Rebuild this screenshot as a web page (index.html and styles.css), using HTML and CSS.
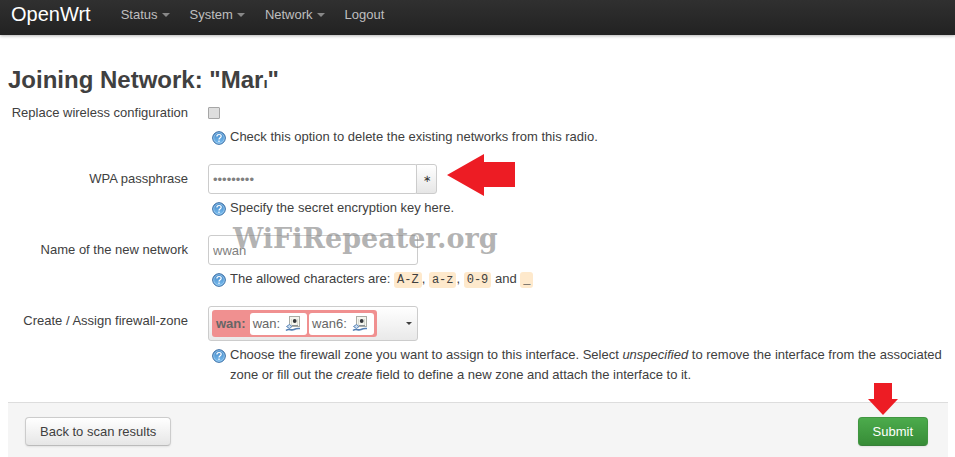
FILE: index.html
```html
<!DOCTYPE html>
<html lang="en">
<head>
<meta charset="utf-8">
<meta name="viewport" content="width=device-width, initial-scale=1">
<title>OpenWrt</title>
<link rel="stylesheet" href="styles.css">
</head>
<body>
<svg class="sprites" aria-hidden="true">
  <defs>
    <linearGradient id="ball" x1="0" y1="0" x2="0" y2="1">
      <stop offset="0" stop-color="#3f83c4"/>
      <stop offset="1" stop-color="#7cc0f2"/>
    </linearGradient>
    <symbol id="help" viewBox="0 0 14 14">
      <circle cx="7" cy="7" r="6.3" fill="url(#ball)" stroke="#2c629c" stroke-width="1"/>
      <circle cx="7" cy="7" r="5.3" fill="none" stroke="#a9d2f2" stroke-width=".7"/>
      <path d="M4.900 5.600C4.900 4.200 5.800 3.500 7 3.500C8.300 3.500 9.200 4.200 9.200 5.300C9.200 6.800 7 6.700 7 8.500M7 9.600V11" fill="none" stroke="#fff" stroke-width="1.200"/>
    </symbol>
    <symbol id="wifi" viewBox="0 0 16 16">
      <rect x="4.500" y=".5" width="10" height="10" fill="#f4f5ee" stroke="#a9aca5"/>
      <path d="M6.500 9V3M12.500 9V3" stroke="#d9dcd2" fill="none"/>
      <circle cx="9.700" cy="5" r="1.900" fill="#34383b"/>
      <path d="M7 9.500h6" stroke="#8b9297"/>
      <path d="M1.500 10.500L4.500 8.500L7 10.500L4.500 12.500Z" fill="#c8dcf0" stroke="#5c86b8"/>
      <path d="M1 14.500C4 12 6 15 9 13.500S13 12.500 15 12.500" fill="none" stroke="#5580b4" stroke-width="1.600"/>
    </symbol>
  </defs>
</svg>

<header class="topbar">
  <a class="brand" href="#">OpenWrt</a>
  <nav class="menu">
    <a class="has-menu" href="#">Status</a>
    <a class="has-menu" href="#">System</a>
    <a class="has-menu" href="#">Network</a>
    <a href="#">Logout</a>
  </nav>
</header>

<main class="page">
  <h1>Joining Network: "Mar<span class="cut">ı</span>"</h1>
  <form>
    <div class="row">
      <label class="name" for="replace">Replace wireless configuration</label>
      <div class="field">
        <div class="check"><input type="checkbox" id="replace"></div>
        <p class="hint"><svg class="help"><use href="#help"/></svg>Check this option to delete the existing networks from this radio.</p>
      </div>
    </div>

    <div class="row">
      <label class="name tall" for="key">WPA passphrase</label>
      <div class="field">
        <div class="group">
          <input class="text" type="password" id="key" value="password1">
          <button class="reveal" type="button" aria-label="Reveal password">∗</button>
          <svg class="arrow-left" viewBox="0 0 68 42" aria-hidden="true"><path d="M0 21L37 0V8H68V33H37V42Z"/></svg>
        </div>
        <p class="hint"><svg class="help"><use href="#help"/></svg>Specify the secret encryption key here.</p>
      </div>
    </div>

    <div class="row">
      <label class="name tall" for="netname">Name of the new network</label>
      <div class="field">
        <div class="group">
          <input class="text" type="text" id="netname" value="wwan">
          <span class="watermark">WiFiRepeater.org</span>
        </div>
        <p class="hint"><svg class="help"><use href="#help"/></svg>The allowed characters are: <code>A-Z</code>, <code>a-z</code>, <code>0-9</code> and <code>_</code></p>
      </div>
    </div>

    <div class="row">
      <label class="name tall" for="zone">Create / Assign firewall-zone</label>
      <div class="field">
        <button class="zone-select" type="button" id="zone" aria-haspopup="listbox">
          <span class="zone"><strong>wan:</strong>
            <span class="iface">wan: <svg class="wifi"><use href="#wifi"/></svg></span>
            <span class="iface">wan6: <svg class="wifi"><use href="#wifi"/></svg></span>
          </span>
        </button>
        <p class="hint"><svg class="help"><use href="#help"/></svg>Choose the firewall zone you want to assign to this interface. Select <em>unspecified</em> to remove the interface from the associated zone or fill out the <em>create</em> field to define a new zone and attach the interface to it.</p>
      </div>
    </div>

    <div class="actions">
      <button class="btn" type="button">Back to scan results</button>
      <button class="btn submit" type="submit">Submit</button>
      <svg class="arrow-down" viewBox="0 0 30 32" aria-hidden="true"><path d="M6 0H24V16H30L15 32L0 16H6Z"/></svg>
    </div>
  </form>
</main>
</body>
</html>
```
FILE: styles.css
```css
* {
  box-sizing: border-box;
}

body {
  margin: 0;
  background: #fff;
  color: #404040;
  font: 13px/20px "Liberation Sans", Arial, sans-serif;
}

.sprites {
  position: absolute;
  width: 0;
  height: 0;
}

.topbar {
  display: flex;
  gap: 20px;
  height: 35px;
  padding: 0 11px;
  line-height: 28px;
  background: linear-gradient(#303030, #222);
  box-shadow: 0 1px 3px rgba(0, 0, 0, .3);
}

.topbar a {
  color: #bfbfbf;
  text-decoration: none;
}

.topbar .brand {
  color: #fff;
  font-size: 20px;
}

.menu {
  display: flex;
  gap: 20px;
  padding: 1px 0 0 10px;
}

.has-menu::after {
  content: "";
  display: inline-block;
  margin-left: 4px;
  vertical-align: 2px;
  border: 4px solid transparent;
  border-top-color: #888;
  border-bottom: 0;
}

.page {
  max-width: 940px;
  margin: 0 7px 0 8px;
}

h1 {
  margin: 27px 0 2px;
  font-size: 24px;
  line-height: 36px;
}

.cut {
  font-size: 15px;
}

.row {
  display: grid;
  grid-template-columns: 180px 1fr;
  gap: 20px;
  margin-bottom: 17px;
}

.name {
  text-align: right;
}

.tall {
  line-height: 30px;
}

.check {
  display: flex;
  align-items: center;
  height: 20px;
}

.check input {
  appearance: none;
  width: 12px;
  height: 12px;
  margin: 0;
  border: 1px solid #a6a6a6;
  border-radius: 1px;
  background: #dedede;
}

.hint {
  position: relative;
  margin: 4px 0 0;
  padding-left: 22px;
}

.help {
  position: absolute;
  top: 4px;
  left: 4px;
  width: 14px;
  height: 14px;
}

.group {
  position: relative;
  display: flex;
}

.text {
  width: 210px;
  height: 30px;
  padding: 4px;
  border: 1px solid #ccc;
  border-radius: 3px;
  background: #fff;
  color: #808080;
  font: inherit;
}

.reveal {
  width: 21px;
  height: 30px;
  margin-left: -2px;
  padding: 0;
  border: 1px solid #ccc;
  border-radius: 0 3px 3px 0;
  background: linear-gradient(#fff, #e6e6e6);
  color: #333;
  font: inherit;
  font-size: 10px;
}

.arrow-left {
  position: absolute;
  top: -10px;
  left: 239px;
  width: 68px;
  height: 42px;
}

.arrow-left path,
.arrow-down path {
  fill: #ed1c24;
}

.watermark {
  position: absolute;
  top: -12px;
  left: 25px;
  color: rgba(128, 128, 128, .6);
  font: bold 27px/32px "DejaVu Serif", serif;
  pointer-events: none;
}

code {
  padding: 1px 3px;
  border-radius: 3px;
  background: #fee9cc;
  color: #404040;
  font: 12px "Liberation Mono", monospace;
}

.zone-select {
  display: flex;
  align-items: center;
  justify-content: space-between;
  width: 210px;
  height: 35px;
  padding: 0 5px 0 3px;
  border: 1px solid #ccc;
  border-radius: 3px;
  background: linear-gradient(#fff, #e9e9e9);
  color: #666;
  font: inherit;
}

.zone-select::after {
  content: "";
  border: 3px solid transparent;
  border-top-color: #404040;
  border-bottom: 0;
}

.zone {
  display: flex;
  align-items: center;
  gap: 2px;
  height: 27px;
  padding: 0 3px 0 4px;
  border-radius: 3px;
  background: #f09090;
}

.zone strong {
  margin-right: 2px;
}

.iface {
  display: flex;
  align-items: center;
  gap: 5px;
  height: 22px;
  padding: 0 6px 0 3px;
  border-radius: 3px;
  background: #fff;
}

.wifi {
  width: 16px;
  height: 16px;
}

.actions {
  position: relative;
  display: flex;
  justify-content: space-between;
  padding: 14px 20px 18px 17px;
  border-top: 1px solid #ddd;
  background: #f5f5f5;
}

.btn {
  height: 29px;
  padding: 0 14px;
  border: 1px solid #ccc;
  border-bottom-color: #bbb;
  border-radius: 4px;
  background: linear-gradient(#fff, #e6e6e6);
  box-shadow: 0 1px 2px rgba(0, 0, 0, .08);
  color: #404040;
  font: inherit;
}

.submit {
  border-color: #419641 #419641 #37803a;
  background: linear-gradient(#4cab4c, #378c37);
  color: #fff;
}

.arrow-down {
  position: absolute;
  top: -20px;
  right: 50px;
  width: 30px;
  height: 32px;
}
```
